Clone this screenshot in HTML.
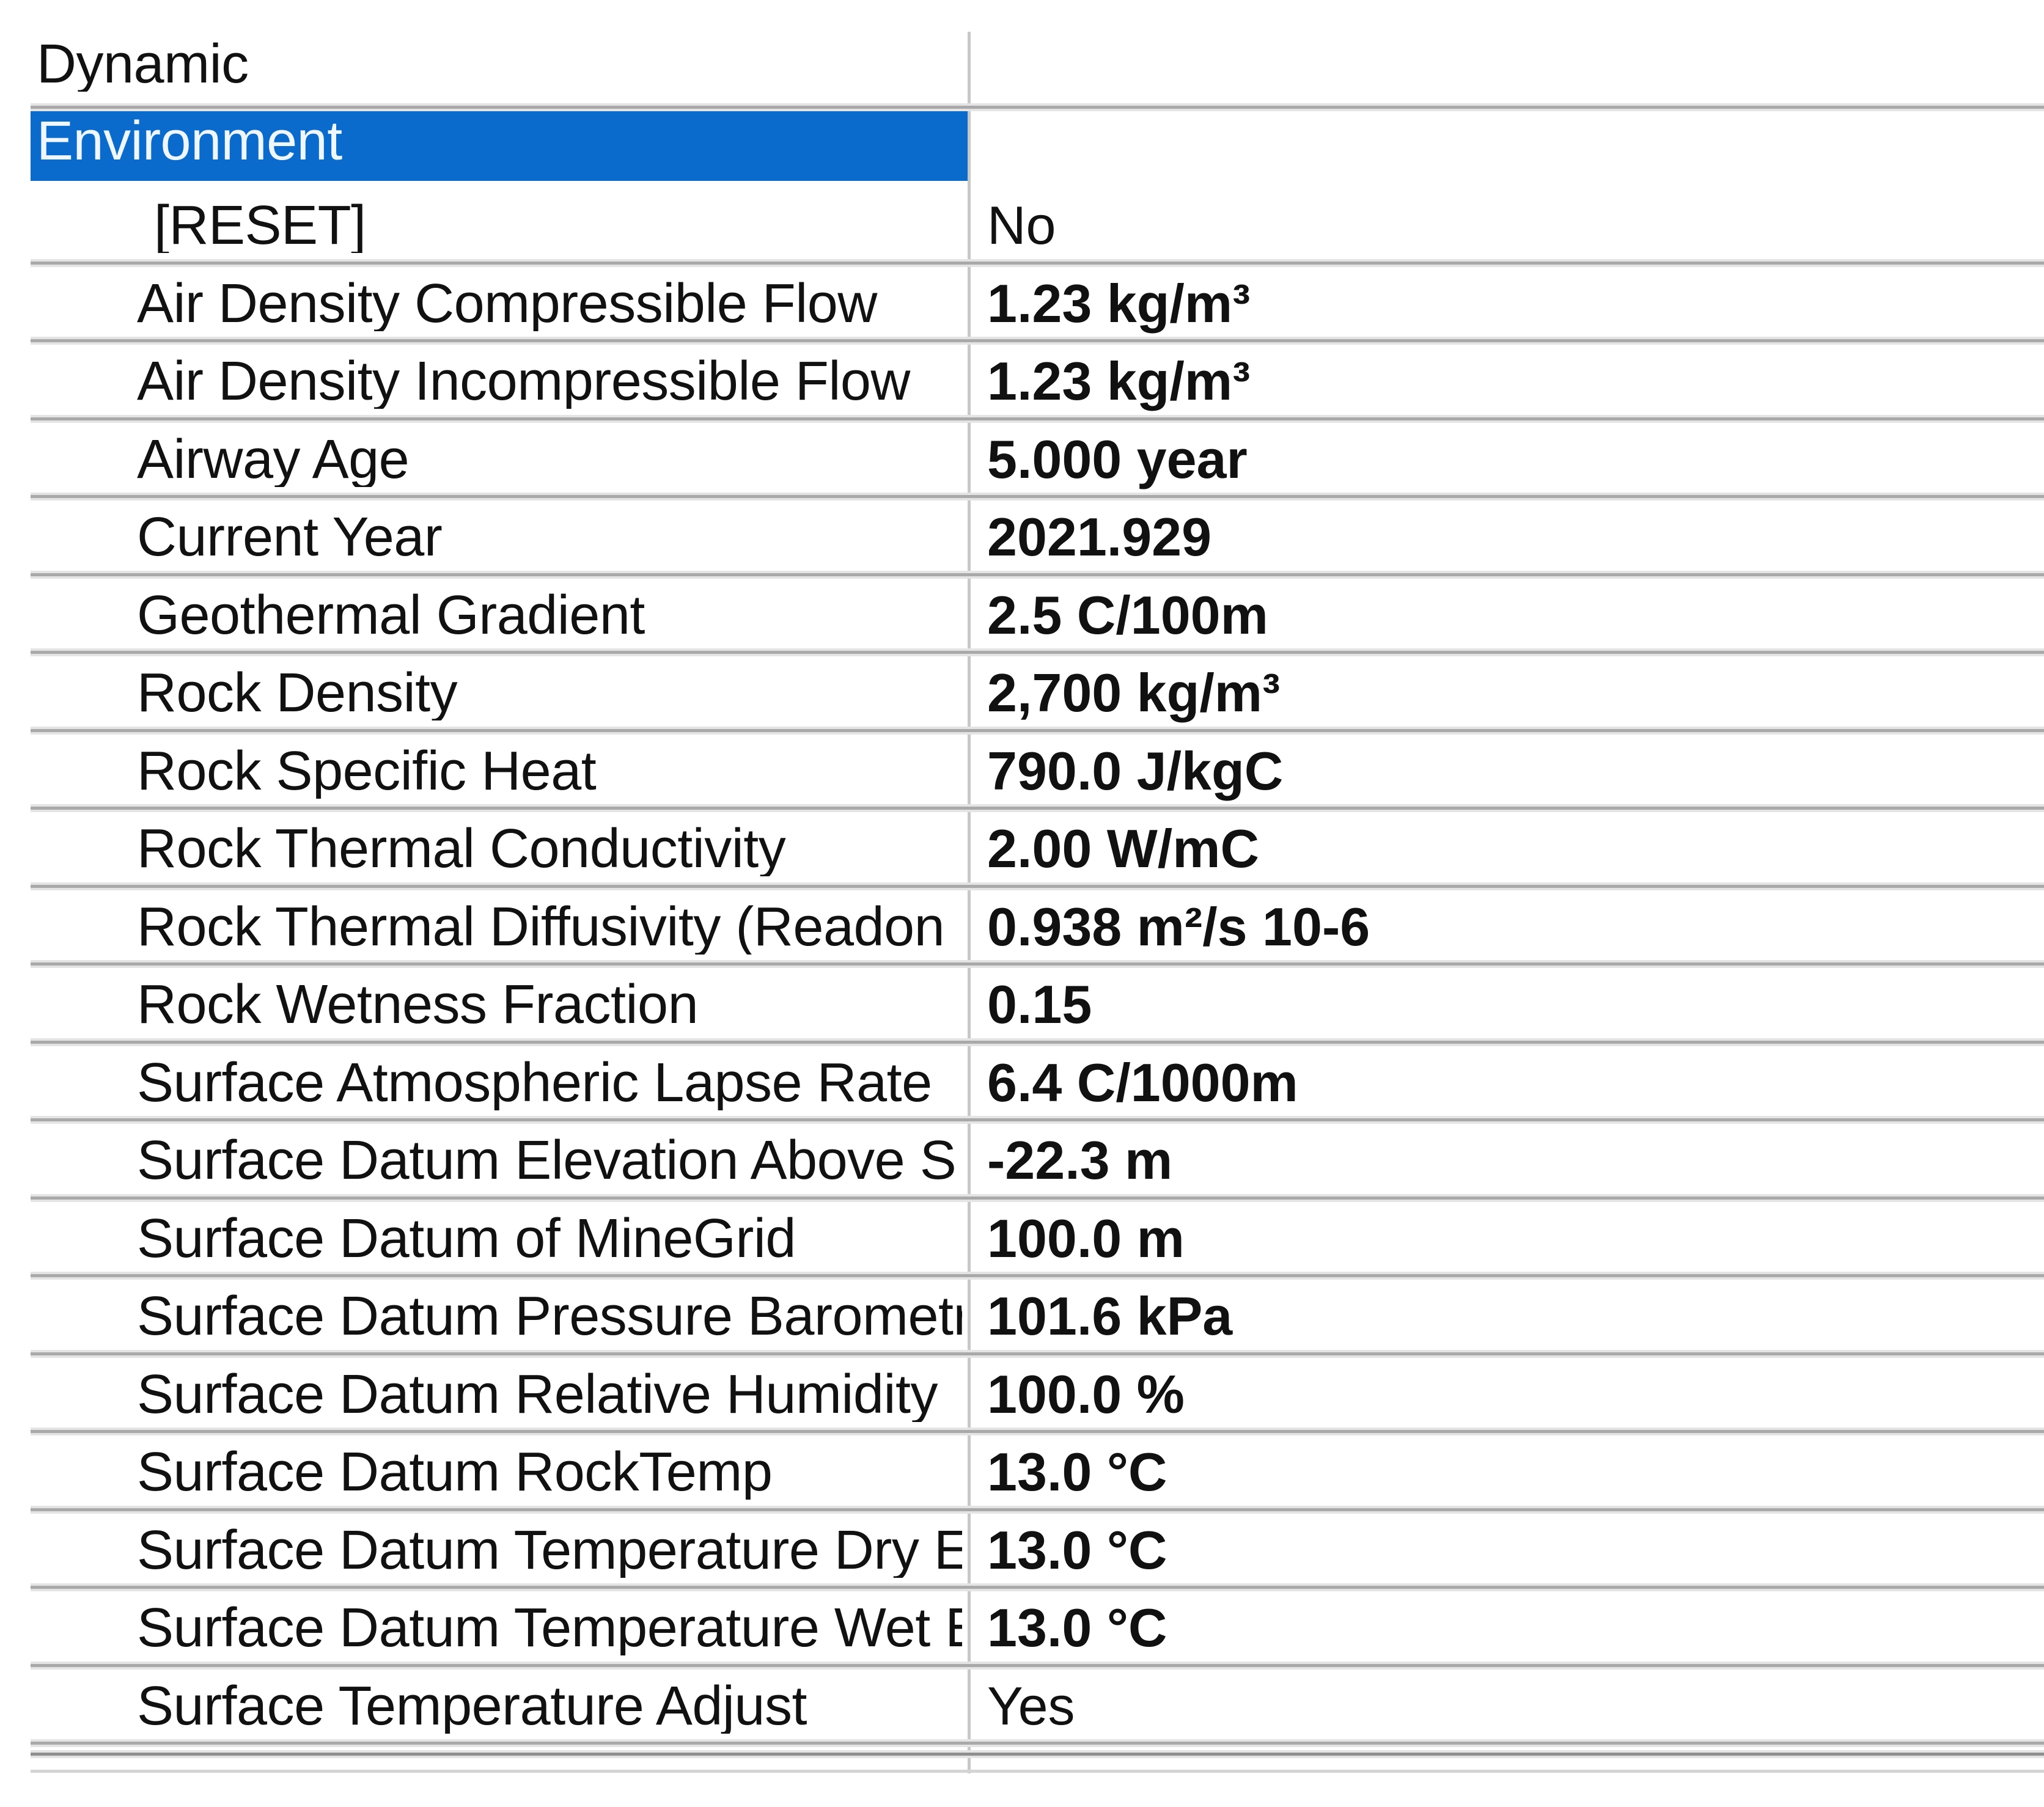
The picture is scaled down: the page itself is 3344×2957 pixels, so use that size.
<!DOCTYPE html>
<html><head><meta charset="utf-8"><style>
html,body{margin:0;padding:0;background:#fff;}
body{width:3344px;height:2957px;position:relative;overflow:hidden;font-family:"Liberation Sans",Arial,sans-serif;color:#111;}
.ln{position:absolute;left:50px;right:0;height:5px;background:#a9a9a9;box-shadow:0 -4px 0 #e4e4e4,0 4px 0 #e4e4e4;}
.t{position:absolute;left:224px;width:1350px;overflow:hidden;font-size:90px;line-height:90px;white-space:nowrap;letter-spacing:-0.5px;margin-top:-10px;}
.v{position:absolute;left:1615px;font-size:88px;line-height:90px;font-weight:bold;white-space:nowrap;margin-top:-10px;}
.vn{font-weight:normal;}
</style></head><body>
<div style="position:absolute;left:50px;top:178px;width:1533px;height:118px;background:#0a6bcc;"></div>
<div style="position:absolute;left:1583px;top:52px;width:5px;height:2850px;background:#c8c8c8;"></div>
<div class="t" style="left:60px;top:70px;">Dynamic</div>
<div class="t" style="left:60px;top:196px;color:#eef6ff;">Environment</div>

<div class="ln" style="top:173px"></div>
<div class="ln" style="top:428px"></div>
<div class="ln" style="top:555px"></div>
<div class="ln" style="top:683px"></div>
<div class="ln" style="top:810px"></div>
<div class="ln" style="top:938px"></div>
<div class="ln" style="top:1065px"></div>
<div class="ln" style="top:1193px"></div>
<div class="ln" style="top:1320px"></div>
<div class="ln" style="top:1448px"></div>
<div class="ln" style="top:1575px"></div>
<div class="ln" style="top:1703px"></div>
<div class="ln" style="top:1830px"></div>
<div class="ln" style="top:1958px"></div>
<div class="ln" style="top:2085px"></div>
<div class="ln" style="top:2213px"></div>
<div class="ln" style="top:2340px"></div>
<div class="ln" style="top:2468px"></div>
<div class="ln" style="top:2595px"></div>
<div class="ln" style="top:2723px"></div>
<div class="ln" style="top:2850px"></div>
<div class="ln" style="top:2868px;background:#8f8f8f"></div>
<div class="ln" style="top:2896px;background:#d4d4d4;box-shadow:none"></div>

<div class="t" style="left:252px;top:334px">[RESET]</div><div class="v vn" style="top:334px">No</div>
<div class="t" style="top:462px">Air Density Compressible Flow</div><div class="v" style="top:462px">1.23 kg/m³</div>
<div class="t" style="top:589px">Air Density Incompressible Flow</div><div class="v" style="top:589px">1.23 kg/m³</div>
<div class="t" style="top:717px">Airway Age</div><div class="v" style="top:717px">5.000 year</div>
<div class="t" style="top:844px">Current Year</div><div class="v" style="top:844px">2021.929</div>
<div class="t" style="top:972px">Geothermal Gradient</div><div class="v" style="top:972px">2.5 C/100m</div>
<div class="t" style="top:1099px">Rock Density</div><div class="v" style="top:1099px">2,700 kg/m³</div>
<div class="t" style="top:1227px">Rock Specific Heat</div><div class="v" style="top:1227px">790.0 J/kgC</div>
<div class="t" style="top:1354px">Rock Thermal Conductivity</div><div class="v" style="top:1354px">2.00 W/mC</div>
<div class="t" style="top:1482px">Rock Thermal Diffusivity (Readon</div><div class="v" style="top:1482px">0.938 m²/s 10-6</div>
<div class="t" style="top:1609px">Rock Wetness Fraction</div><div class="v" style="top:1609px">0.15</div>
<div class="t" style="top:1737px">Surface Atmospheric Lapse Rate</div><div class="v" style="top:1737px">6.4 C/1000m</div>
<div class="t" style="top:1864px">Surface Datum Elevation Above S</div><div class="v" style="top:1864px">-22.3 m</div>
<div class="t" style="top:1992px">Surface Datum of MineGrid</div><div class="v" style="top:1992px">100.0 m</div>
<div class="t" style="top:2119px">Surface Datum Pressure Barometr</div><div class="v" style="top:2119px">101.6 kPa</div>
<div class="t" style="top:2247px">Surface Datum Relative Humidity</div><div class="v" style="top:2247px">100.0 %</div>
<div class="t" style="top:2374px">Surface Datum RockTemp</div><div class="v" style="top:2374px">13.0 °C</div>
<div class="t" style="top:2502px">Surface Datum Temperature Dry E</div><div class="v" style="top:2502px">13.0 °C</div>
<div class="t" style="top:2629px">Surface Datum Temperature Wet E</div><div class="v" style="top:2629px">13.0 °C</div>
<div class="t" style="top:2757px">Surface Temperature Adjust</div><div class="v vn" style="top:2757px">Yes</div>
</body></html>
